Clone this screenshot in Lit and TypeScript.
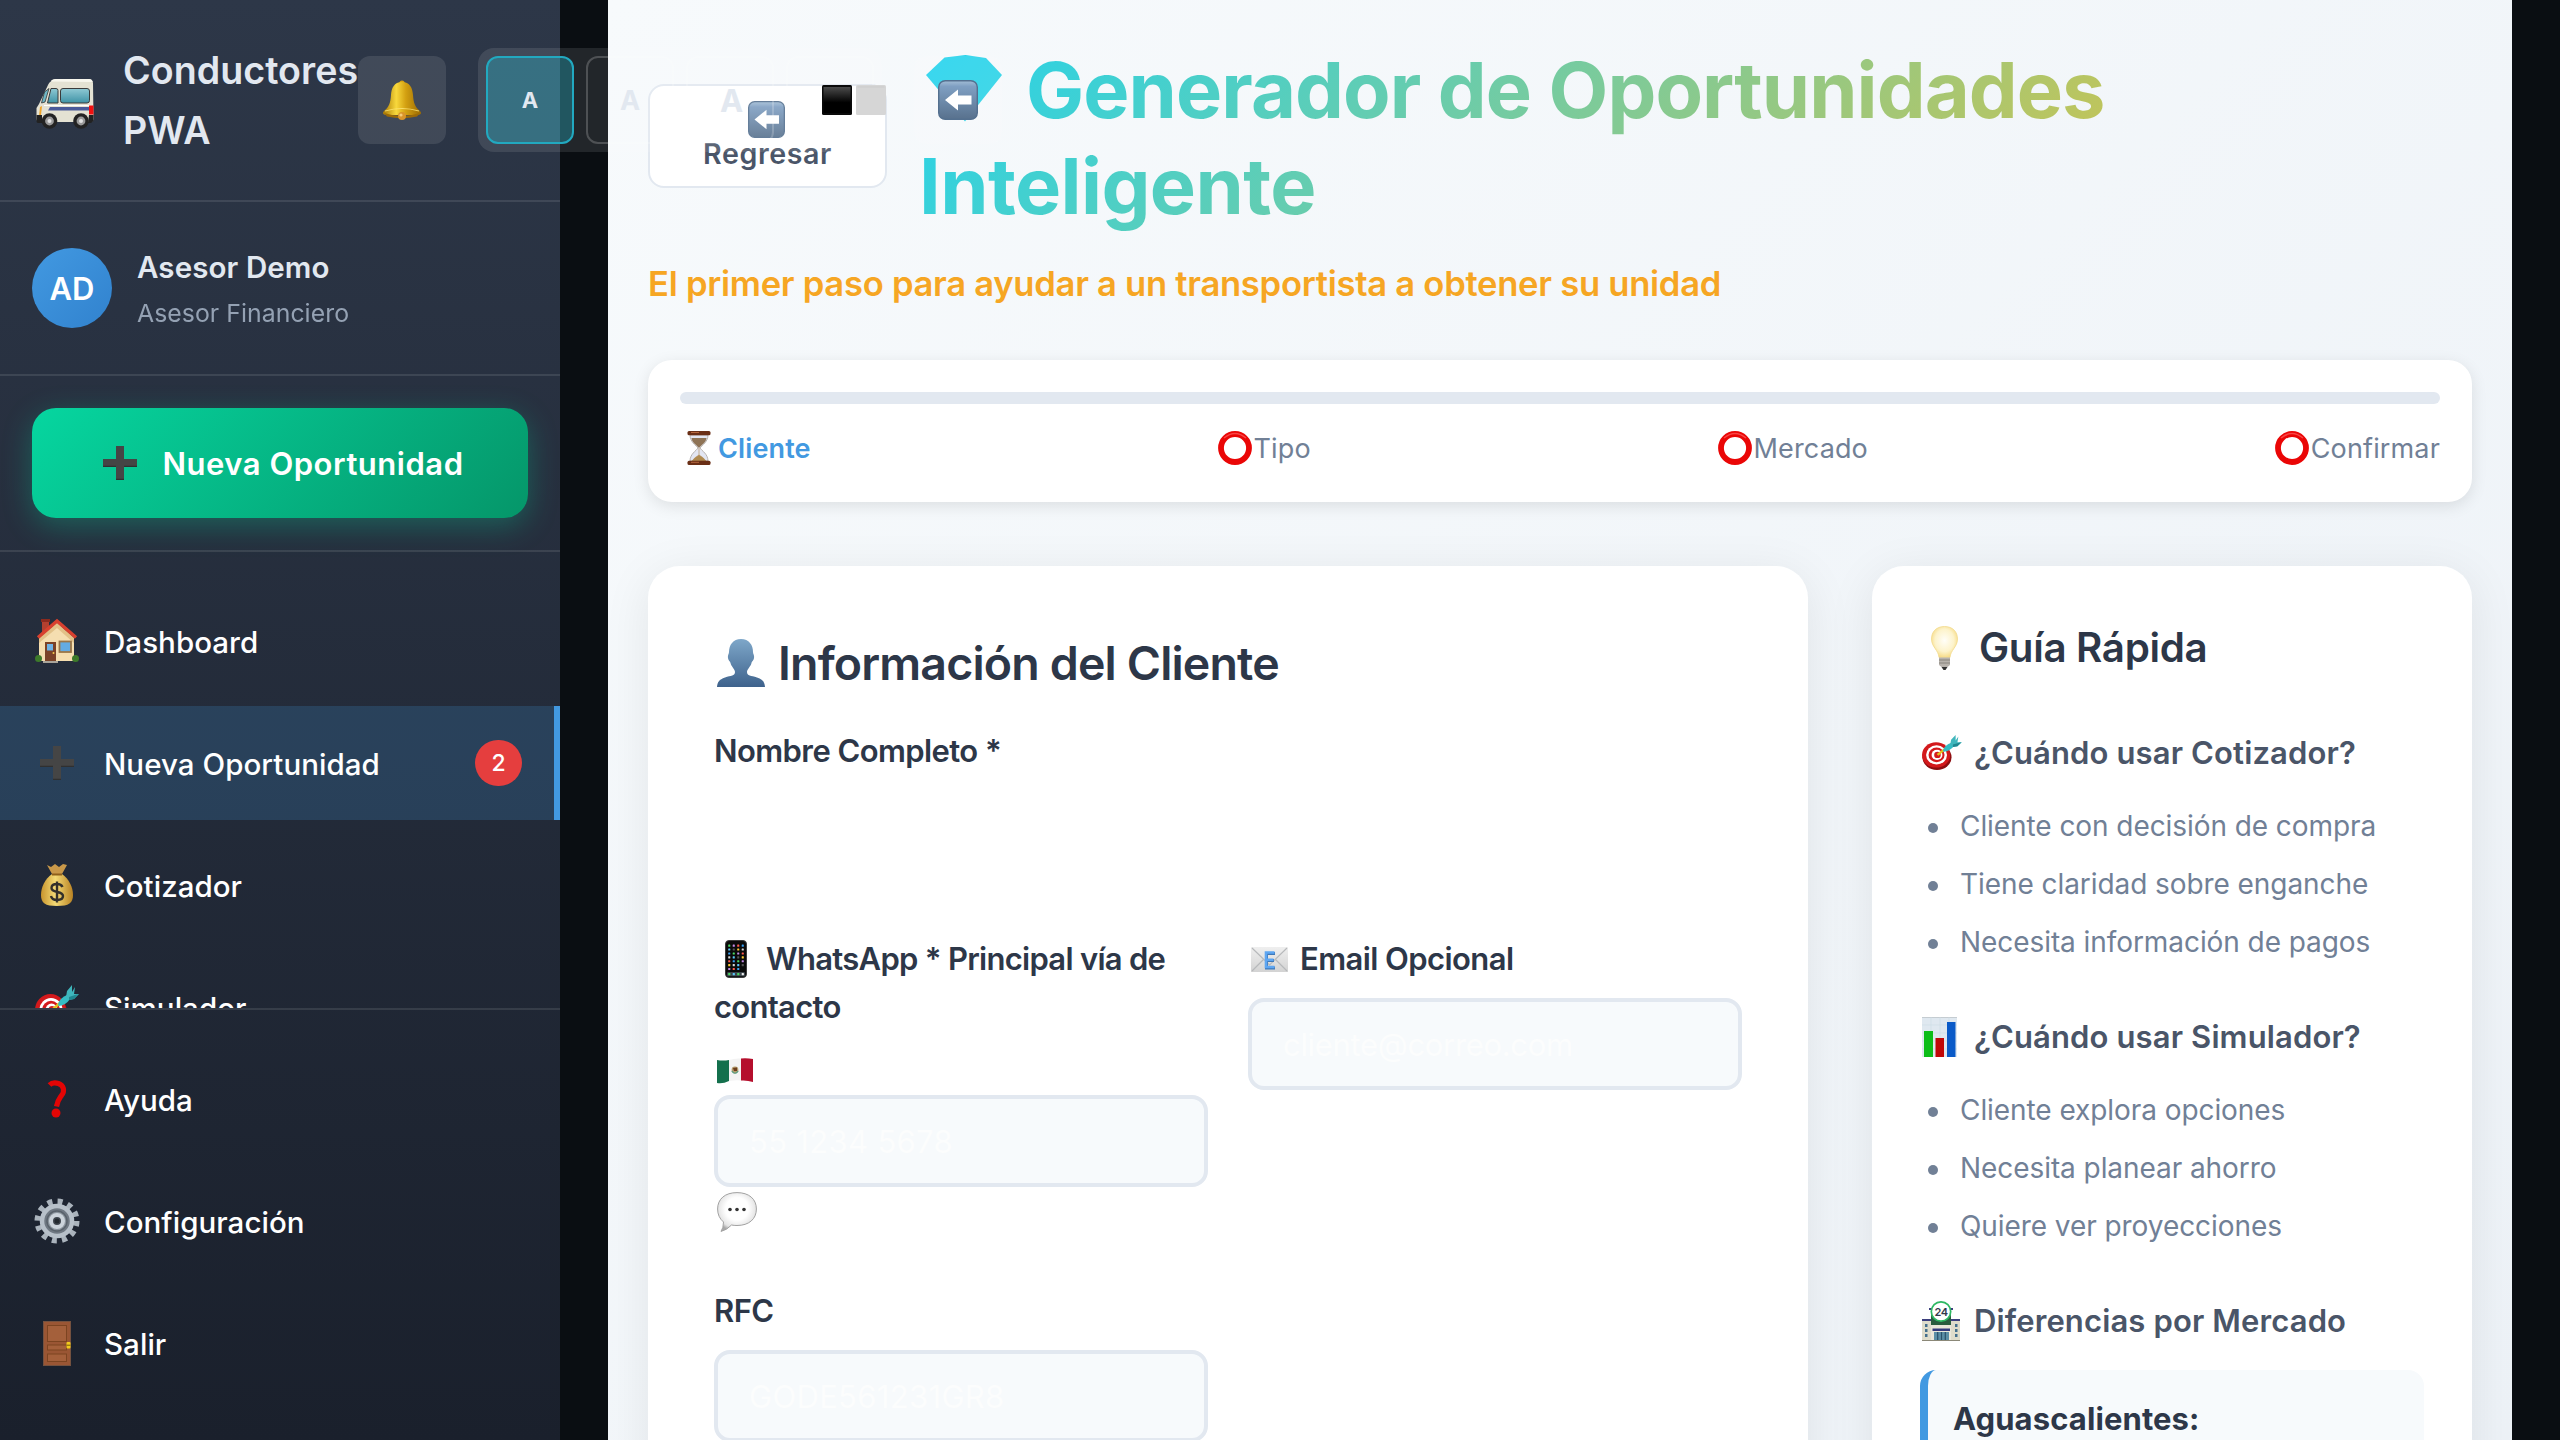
import { LitElement, html, svg, css, TemplateResult } from "lit";
import { customElement } from "lit/decorators.js";
import { classMap } from "lit/directives/class-map.js";

type Art = { w: number; h: number; art: TemplateResult };

/* Icon artwork, each drawn in a box of its own pixel size. */
const ICONS: Record<string, Art> = {
  van: { w: 58, h: 58, art: svg`
    <defs><linearGradient id="vg" x2="0" y2="1"><stop offset="0" stop-color="#8fc9d4"/><stop offset="1" stop-color="#3f93a6"/></linearGradient></defs>
    <path d="M15 8.500Q16 6.100 20 6H53Q56.500 6 57 10L57.500 46Q57.500 49 54 49H3Q.5 49 .5 45V35L3 31L12 12Q13 9 15 8.500Z" fill="#e4e2d3"/>
    <path d="M14.500 8.500Q16 6 20 6H53Q56 6 56.700 9Z" fill="#f8f7ee"/>
    <path d="M8.500 19L5.500 30L9 29L13 15.500Z" fill="#6fb7c6" stroke="#333" stroke-width=".8"/>
    <path d="M15 15.500H20Q22 15.500 22 17.500V30H11.500Z" fill="url(#vg)" stroke="#3b3b3b" stroke-width="1"/>
    <rect x="24.500" y="15.500" width="29" height="14.500" rx="2.500" fill="url(#vg)" stroke="#3b3b3b" stroke-width="1"/>
    <path d="M8 32H54V33H8Z" fill="#fff"/><path d="M14 34H54V37.500H12Z" fill="#4a5a99"/>
    <path d="M4 34L6 33L5 42L3 43Z" fill="#f0a52a"/>
    <rect x="53" y="32.500" width="4.500" height="9" fill="#f01010"/>
    <path d="M.5 42H6V50H2Q.5 50 .5 48ZM53 42H57.500V48L55 50H52Z" fill="#222"/>
    <circle cx="13.500" cy="48" r="7.800" fill="#232323"/><circle cx="45" cy="48" r="7.800" fill="#232323"/>
    <circle cx="13.500" cy="48" r="4.400" fill="#9a9a9a"/><circle cx="45" cy="48" r="4.400" fill="#9a9a9a"/>
    <circle cx="13.500" cy="48" r="2" fill="#e2e2e2"/><circle cx="45" cy="48" r="2" fill="#e2e2e2"/>` },
  bell: { w: 40, h: 40, art: svg`
    <defs><linearGradient id="bg"><stop offset="0" stop-color="#a87704"/><stop offset=".35" stop-color="#f8d83c"/><stop offset=".6" stop-color="#d3a011"/><stop offset="1" stop-color="#986903"/></linearGradient></defs>
    <circle cx="20" cy="3" r="2.600" fill="#d7a311"/>
    <path d="M20 2C28 2 30.500 8 31 15C31.500 23 33 27 38 31Q41 34 36 35H4Q-1 34 2 31C7 27 8.500 23 9 15C9.500 8 12 2 20 2Z" fill="url(#bg)"/>
    <path d="M3 31Q20 26 37 31" fill="none" stroke="#ffe97a" stroke-width="1.200" opacity=".8"/>
    <path d="M2 33Q20 39 38 33L35 36.500Q20 40 5 36.500Z" fill="#9c6a06"/>
    <circle cx="20" cy="36" r="4" fill="#d9942a"/><circle cx="19" cy="35" r="1.600" fill="#f6cb77"/>` },
  arrow: { w: 40, h: 40, art: svg`
    <defs><linearGradient id="ag" x2="0" y2="1"><stop offset="0" stop-color="#a3bdd6"/><stop offset=".15" stop-color="#7f9fc2"/><stop offset="1" stop-color="#58718d"/></linearGradient></defs>
    <rect x=".7" y=".7" width="38.600" height="38.600" rx="6.500" fill="url(#ag)" stroke="#54708f" stroke-width="1.400"/>
    <path d="M7 20L20 9.500V15.500H33.500V24.500H20V30.500Z" fill="#fff"/>` },
  plus: { w: 34, h: 34, art: svg`
    <path d="M13 0H21V13H34V21H21V34H13V21H0V13H13Z" fill="#454545"/>
    <path d="M13 33.300H21M0 20.300H13M21 20.300H34" stroke="#303030" stroke-width="1.200"/>` },
  house: { w: 44, h: 44, art: svg`
    <path d="M7 1H14V18H7Z" fill="#b3402f"/><path d="M6 0H15V3H6Z" fill="#8c2a1e"/>
    <path d="M22 4L39 19V42H4V19Z" fill="#f5deb0"/>
    <path d="M22 4L39 19V24L22 9L4 24V19Z" fill="#e2c188"/>
    <path d="M3 18.500L22 2L41 18.500" fill="none" stroke="#d8402e" stroke-width="3.400"/>
    <path d="M10 23H21V42H10Z" fill="#7b4227"/><rect x="12" y="25" width="6" height="6.500" fill="#6fb2e4"/><circle cx="18.500" cy="34" r="1" fill="#f3c94e"/>
    <rect x="24.500" y="22.500" width="11.500" height="10.500" fill="#63abe3" stroke="#9b7648" stroke-width="1.800"/>
    <circle cx="3.500" cy="39.500" r="3.500" fill="#3d7a2a"/><circle cx="40.500" cy="39.500" r="3.500" fill="#3d7a2a"/>
    <path d="M8 42H23V44H8Z" fill="#a9a49a"/>` },
  bag: { w: 32, h: 42, art: svg`
    <defs><linearGradient id="mg"><stop offset="0" stop-color="#c8952e"/><stop offset=".45" stop-color="#f4da75"/><stop offset="1" stop-color="#b98324"/></linearGradient></defs>
    <path d="M6 1L10 3L14 0L18 3L22 0L26 1L21 10H11Z" fill="#c99849"/>
    <path d="M11 10H21C28 15 32 23 32 31C32 39 28 42 16 42S0 39 0 31C0 23 4 15 11 10Z" fill="url(#mg)"/>
    <path d="M11 10.500H21" stroke="#8e5f1b" stroke-width="2"/>
    <path d="M21.500 23C20.500 20.500 18.500 20 16 20C12.500 20 10.500 21.700 10.500 24C10.500 29.500 22 26.500 22 32C22 34.500 19.500 36 16 36C12.500 36 10.500 34.500 10 32M16 17.500V38.500" fill="none" stroke="#33302b" stroke-width="2.400"/>` },
  target: { w: 44, h: 44, art: svg`
    <ellipse cx="16.500" cy="28" rx="16" ry="16" fill="#8c0d10"/><ellipse cx="15.500" cy="25" rx="15.500" ry="16" fill="#d3191c"/>
    <ellipse cx="16" cy="25" rx="11.500" ry="12" fill="#fff"/><ellipse cx="16" cy="25" rx="8.800" ry="9.300" fill="#d3191c"/>
    <ellipse cx="16.500" cy="25" rx="6" ry="6.400" fill="#fff"/><ellipse cx="17" cy="25" rx="3.600" ry="4" fill="#d3191c"/>
    <path d="M17 25L25 18" stroke="#e4c21b" stroke-width="2.600"/>
    <path d="M23 20Q24 13 33 9.500L35 14Q31 20 24 21Z" fill="#35bcc4"/>
    <path d="M31 12L32 6L37 0L37 7L40 2L39 9L44 9L39 14L34 15Z" fill="#3fb6bc"/><path d="M34 12L43 9L39 14L34 15Z" fill="#1f8790"/>` },
  question: { w: 18, h: 37, art: svg`
    <path d="M1.500 4C4 1.500 8 1.700 10.500 2.500C16 4.500 17 10 13.500 14.500C11 18 9.500 19.500 8.500 25.500" fill="none" stroke="#e30505" stroke-width="5.200"/>
    <circle cx="8" cy="32" r="4.500" fill="#e30505"/>` },
  gear: { w: 46, h: 46, art: svg`
    <circle cx="23" cy="23" r="19.500" fill="none" stroke="#aab3bc" stroke-width="6" stroke-dasharray="5 5.210"/>
    <circle cx="23" cy="23" r="15" fill="#6f7882" stroke="#b7c0c9" stroke-width="4.500"/>
    <circle cx="23" cy="23" r="10" fill="#8b949d" stroke="#59626b" stroke-width="1.500"/>
    <circle cx="23" cy="23" r="6" fill="#3e454d" stroke="#ccd4db" stroke-width="4"/><circle cx="23" cy="23" r="2.500" fill="#23292f"/>` },
  door: { w: 28, h: 45, art: svg`
    <rect width="28" height="45" fill="#9a5634"/><rect x=".5" y=".5" width="27" height="44" fill="none" stroke="#74513f"/>
    <g fill="#a4603b" stroke="#7c4421" stroke-width="1"><rect x="4.500" y="4.500" width="19" height="16"/><rect x="4.500" y="24" width="19" height="5"/><rect x="4.500" y="33" width="19" height="7.500"/></g>
    <rect x="23.500" y="21" width="4" height="6.500" rx="1" fill="#f2cb1d"/><path d="M23.500 24.200H27.500" stroke="#7c5a0a"/>` },
  hourglass: { w: 24, h: 34, art: svg`
    <path d="M3 4C3 11 9 14 11 17C9 20 3 23 3 30H21C21 23 15 20 13 17C15 14 21 11 21 4Z" fill="#e3e6f2" stroke="#a9a39c" stroke-width=".8"/>
    <path d="M4.500 7C5 12 10 14 12 17C14 14 19 12 19.500 7Z" fill="#8f7456"/><path d="M12 17V30H5Q8 26 12 24Q16 26 19 30H12" fill="#b08a50" stroke="#b08a50" stroke-width=".6"/>
    <rect x=".5" width="23" height="4.200" rx="1.500" fill="#6a2f16"/><rect x=".5" y="29.800" width="23" height="4.200" rx="1.500" fill="#6a2f16"/>
    <path d="M4 1.500H12M4 31.300H12" stroke="#b5673f" stroke-width="1"/>` },
  ring: { w: 34, h: 34, art: svg`<circle cx="17" cy="17" r="14" fill="none" stroke="#ea0606" stroke-width="5.800"/><path d="M6 7Q17 -2 28 7" fill="none" stroke="#f94545" stroke-width="1.500"/>` },
  person: { w: 48, h: 48, art: svg`
    <defs><linearGradient id="pg" x2="0" y2="1"><stop offset="0" stop-color="#7ea7c9"/><stop offset="1" stop-color="#3e628c"/></linearGradient></defs>
    <path d="M24 0C32 0 36 6 36 13C36 15 37.500 16 37 19C36.500 22 35 22 34.500 24C33.500 28 30 30 30 33C30 37 34 36.500 40 38.500C46 40.500 47.500 43 48 48H0C.5 43 2 40.500 8 38.500C14 36.500 18 37 18 33C18 30 14.500 28 13.500 24C13 22 11.500 22 11 19C10.500 16 12 15 12 13C12 6 16 0 24 0Z" fill="url(#pg)"/>` },
  phone: { w: 22, h: 38, art: svg`
    <rect x=".5" y=".5" width="21" height="37" rx="3.500" fill="#0a0a0a" stroke="#3c3c3c"/>
    ${[0, 1, 2, 3, 4, 5, 6].map((r) => [0, 1, 2, 3].map((c) => r === 6 && c === 3 ? svg`` : svg`<rect x=${3.2 + c * 4.5} y=${4.6 + r * 3.9} width="2.100" height="2.100" rx=".5" fill=${["#4cd964", "#d8d8d8", "#c58be8", "#5ac8fa", "#ff5a4e", "#555555", "#3aa0f3", "#ffcc33"][(r * 3 + c * 2) % 8]}/>`))}
    <rect x="2" y="32" width="18" height="4.200" rx="1.200" fill="#9fb8c8" opacity=".35"/>
    ${["#4cd964", "#5ac8fa", "#4cd964", "#eeeeee"].map((f, c) => svg`<rect x=${3.2 + c * 4.5} y="33" width="2.200" height="2.200" rx=".5" fill=${f}/>`)}` },
  flag: { w: 36, h: 25, art: svg`
    <path d="M0 2Q6 3 12 2V23Q6 26 0 25Z" fill="#14704d"/><path d="M12 2Q18 0 24 .500V22.500Q18 22 12 23Z" fill="#f3f3f3"/><path d="M24 .5Q30 0 36 1V24Q30 22 24 22.500Z" fill="#b50f2d"/>
    <circle cx="18" cy="12" r="3.400" fill="#b59a6a"/><path d="M16 10L20 9.500L20 13L17 13Z" fill="#6a3d1d"/><path d="M14.800 13Q18 17.500 21.200 13" fill="none" stroke="#4c9f86" stroke-width="1.200"/>` },
  bubble: { w: 40, h: 40, art: svg`
    <defs><radialGradient id="cg" cx=".5" cy=".42" r=".58"><stop offset=".5" stop-color="#fff"/><stop offset=".85" stop-color="#e4e4e4"/><stop offset="1" stop-color="#a8a8a8"/></radialGradient></defs>
    <path d="M20 .6C32 .6 39.400 7 39.400 17S32 33.500 20 33.500Q17 33.500 14.500 33Q10 38 4 39.400Q6.500 36 6.500 30Q.6 25 .6 17C.6 7 8 .6 20 .6Z" fill="url(#cg)" stroke="#a2a2a2" stroke-width="1"/>
    <g fill="#333"><circle cx="13" cy="17.500" r="1.800"/><circle cx="20" cy="17.500" r="1.800"/><circle cx="27" cy="17.500" r="1.800"/></g>` },
  mail: { w: 37, h: 25, art: svg`
    <defs><linearGradient id="eg" x2="0" y2="1"><stop offset="0" stop-color="#efefef"/><stop offset="1" stop-color="#d3d3d3"/></linearGradient></defs>
    <rect width="37" height="25" fill="url(#eg)"/><path d="M1 1L18.500 18L36 1M1 24L13 12M36 24L24 12" fill="none" stroke="#b7b9bb" stroke-width="1.200"/>
    <path d="M24 6.500H15.500V21H24M15.500 13.500H23" fill="none" stroke="#3f79b8" stroke-width="3"/><path d="M23.500 5.500H15V20H23.500M15 12.800H22.500" fill="none" stroke="#5ea6f2" stroke-width="2.600"/>` },
  bulb: { w: 27, h: 44, art: svg`
    <defs><radialGradient id="lg" cx=".5" cy=".45" r=".6"><stop offset="0" stop-color="#fffef8"/><stop offset=".6" stop-color="#fdf3cb"/><stop offset="1" stop-color="#f5d576"/></radialGradient></defs>
    <path d="M13.500 .5C22 .5 26.500 6 26.500 13C26.500 21 19.500 24 19 31.500H8C7.500 24 .5 21 .5 13C.5 6 5 .5 13.500 .5Z" fill="url(#lg)" stroke="#f3da8c" stroke-width=".8"/>
    <path d="M8 31.500H19V39L16.500 41H10.500L8 39Z" fill="#b7b2ac"/><path d="M8 34H19M8 37H19" stroke="#857f79" stroke-width=".9"/><path d="M10.500 41H16.500L14.500 44H12.500Z" fill="#333"/>` },
  chart: { w: 35, h: 40, art: svg`
    <rect width="35" height="40" fill="#dfe8f0"/><path d="M0 .5H35" stroke="#c5ccd1"/><path d="M0 8H35M0 16H35M0 24H35M0 32H35M9 0V40M18 0V40M27 0V40" stroke="#cfdbe6" stroke-width=".6"/>
    <rect x="2" y="14" width="9" height="26" fill="#0cbd18"/><rect x="13.500" y="21" width="8.500" height="19" fill="#c00808"/><rect x="25" y="5" width="8.500" height="35" fill="#0a5ac8"/>` },
  store: { w: 38, h: 40, art: svg`
    <path d="M0 19H38V39H0Z" fill="#dedccb"/><path d="M0 18H38V20H0ZM7 7H31V9H7Z" fill="#3c3f7d"/><path d="M9 9H29V24H9Z" fill="#295c3e"/>
    <path d="M9 24H29V39H9Z" fill="#e9e7da"/><path d="M10.500 27.500H28V30H10.500Z" fill="#343a7c"/><path d="M12 31H27V39H12Z" fill="#5b8fa6"/><path d="M15.700 31V39M19.500 31V39M23.300 31V39" stroke="#29506a" stroke-width="1.200"/>
    <path d="M3 23H5.500V26H3ZM3 28H5.500V31H3ZM3 33H5.500V36H3ZM33 23H35.500V26H33ZM33 28H35.500V31H33ZM33 33H35.500V36H33Z" fill="#44708d"/>
    <path d="M0 39H38V40H0Z" fill="#8b8878"/>
    <circle cx="19" cy="10.500" r="9.700" fill="#fff" stroke="#2eb862" stroke-width="1.700"/>
    <text x="19" y="14.500" text-anchor="middle" font-family="Inter, sans-serif" font-size="11" font-weight="600" letter-spacing="-.5" fill="#33394d">24</text>` },
  black: { w: 30, h: 30, art: svg`
    <defs><linearGradient id="kg" x2="0" y2="1"><stop offset="0" stop-color="#4b4b4b"/><stop offset=".6" stop-color="#000"/></linearGradient></defs>
    <rect width="30" height="30" rx="1.500" fill="#0a0a0a"/><rect x="1.500" y="2" width="27" height="26" fill="url(#kg)"/>` },
  white: { w: 30, h: 30, art: svg`<rect width="30" height="30" rx="1.500" fill="#d6d6d6"/><path d="M1.500 2H28.500" stroke="#cbcbcb"/>` },
  gem: { w: 76, h: 66, art: svg`
    <defs><linearGradient id="dg" x2="1" y2="1"><stop offset="0" stop-color="#22d3ee"/><stop offset="1" stop-color="#30d3e3"/></linearGradient></defs>
    <path d="M0 20L18.500 2.500L39.500 0L60 3L76 20L39 66.500Z" fill="url(#dg)"/>` },
};

const icon = (name: string, w?: number, h?: number) => {
  const i = ICONS[name];
  return html`<svg class="ico" width=${w ?? i.w} height=${h ?? i.h} viewBox="0 0 ${i.w} ${i.h}" preserveAspectRatio="none" aria-hidden="true">${i.art}</svg>`;
};

const NAV = [
  { icon: "house", label: "Dashboard" },
  { icon: "plus", label: "Nueva Oportunidad", badge: "2", active: true },
  { icon: "bag", label: "Cotizador" },
  { icon: "target", label: "Simulador" },
];
const FOOT = [
  { icon: "question", label: "Ayuda" },
  { icon: "gear", label: "Configuración" },
  { icon: "door", label: "Salir" },
];
const GUIDE = [
  { icon: "target", w: 40, h: 35, title: "¿Cuándo usar Cotizador?", items: ["Cliente con decisión de compra", "Tiene claridad sobre enganche", "Necesita información de pagos"] },
  { icon: "chart", w: 35, h: 40, title: "¿Cuándo usar Simulador?", items: ["Cliente explora opciones", "Necesita planear ahorro", "Quiere ver proyecciones"] },
];

@customElement("app-root")
export class AppRoot extends LitElement {
  static styles = css`
    :host { display: block; width: 2560px; height: 1440px; overflow: hidden; background: #0a0e12;
      font-family: Inter, "Liberation Sans", sans-serif; color: #2d3748; }
    * { box-sizing: border-box; margin: 0; padding: 0; }
    .ico { display: block; flex: none; overflow: visible; }
    .app { display: flex; height: 1440px; }

    .side { width: 560px; flex: none; height: 1440px; display: flex; flex-direction: column; z-index: 2;
      background: linear-gradient(180deg, #2d3748 0%, #1a202c 100%); position: relative; }
    .head { height: 202px; flex: none; padding: 0 32px; display: flex; align-items: center; border-bottom: 2px solid rgba(255,255,255,.1); white-space: nowrap; }
    .van { width: 91px; flex: none; padding: 4px 0 0 4px; }
    .brand { width: 235px; flex: none; padding-top: 1px; font-size: 37.6px; font-weight: 600; line-height: 60px; letter-spacing: .04px; color: #e2e8f0; white-space: normal; }
    .sq { width: 88px; height: 88px; flex: none; border-radius: 12px; background: rgba(255,255,255,.1); display: flex; align-items: center; justify-content: center; }
    .sizes { display: flex; gap: 12px; flex: none; padding: 8px; height: 104px; margin: 0 32px; border-radius: 16px; background: rgba(255,255,255,.1); }
    .size { width: 88px; height: 88px; flex: none; border: 2px solid rgba(255,255,255,.2); border-radius: 12px; display: flex; align-items: center; justify-content: center;
      color: #e2e8f0; font-weight: 700; font-size: 22px; }
    .size.on { border-color: #22a9c0; background: rgba(34,211,238,.28); }
    .size.mid { font-size: 27px; }
    .size.big { font-size: 31px; padding-left: 3px; }
    .contrast { justify-content: flex-start; gap: 4px; padding-left: 34px; }

    .user { height: 174px; flex: none; padding: 0 32px; display: flex; align-items: center; gap: 25px; border-bottom: 2px solid rgba(255,255,255,.1); }
    .avatar { width: 80px; height: 80px; border-radius: 50%; background: linear-gradient(135deg, #4299e1, #3182ce); color: #fff; font-weight: 600; font-size: 31px;
      display: flex; align-items: center; justify-content: center; }
    .who { padding-top: 2px; }
    .name { font-size: 29.500px; font-weight: 600; line-height: 47px; letter-spacing: .1px; color: #e2e8f0; }
    .role { font-size: 24.800px; line-height: 44px; letter-spacing: .05px; color: #a0aec0; opacity: .9; }
    .cta { height: 176px; flex: none; padding: 32px 32px 0; border-bottom: 2px solid rgba(255,255,255,.1); }
    .ctab { height: 110px; border-radius: 24px; background: linear-gradient(135deg, #06d6a0, #059669); box-shadow: 0 8px 30px rgba(6,214,160,.3); color: #fff;
      font-size: 31px; font-weight: 600; letter-spacing: .52px; display: flex; align-items: center; justify-content: center; gap: 25px; padding-left: 7px; }

    .nav { flex: 1; min-height: 0; overflow: hidden; padding-top: 32px; }
    .foot { height: 432px; flex: none; padding-top: 32px; border-top: 2px solid rgba(255,255,255,.1); }
    .item { height: 114px; margin-bottom: 8px; padding: 0 32px; display: flex; align-items: center; color: #fff; font-size: 29.500px; font-weight: 500; letter-spacing: .05px; }
    .item .slot { width: 50px; flex: none; margin-right: 22px; display: flex; justify-content: center; }
    .item .txt { flex: 1; padding-top: 2px; }
    .item.active { background: rgba(66,153,225,.2); border-right: 6px solid #4299e1; }
    .badge { min-width: 47px; height: 46px; border-radius: 23px; background: #e53e3e; font-size: 23px; font-weight: 500; display: flex; align-items: center; justify-content: center; }

    .main { margin-left: 48px; width: 1904px; flex: none; height: 1440px; overflow: hidden; padding: 40px 40px 0; background: linear-gradient(135deg, #f7fafc 0%, #edf2f7 100%); }
    .top { display: flex; align-items: center; gap: 32px; height: 192px; }
    .back { width: 239px; height: 104px; flex: none; border: 2px solid #e2e8f0; border-radius: 16px; background: #fff; display: flex; flex-direction: column; align-items: center;
      padding-top: 15px; font-size: 28.600px; font-weight: 600; color: #4a5568; letter-spacing: .6px; line-height: 32px; }
    .back .ico { margin-left: -2px; }
    h1 { flex: 1; font-size: 77.600px; font-weight: 700; line-height: 96px; letter-spacing: -.92px; color: transparent; padding-top: 3px;
      background: linear-gradient(135deg, #22d3ee, #fbbf24); -webkit-background-clip: text; background-clip: text; }
    h1 .ico { display: inline-block; vertical-align: -3px; margin: 0 24px 0 7px; }
    h1 .low { letter-spacing: -.6px; }
    .sub { margin-top: 24px; height: 54px; line-height: 54px; font-size: 34.600px; font-weight: 600; letter-spacing: -.27px; color: #f6a623; }
    .steps { margin-top: 50px; height: 142px; border-radius: 24px; background: #fff; padding: 32px; box-shadow: 0 4px 16px rgba(0,0,0,.1); }
    .bar { height: 12px; border-radius: 6px; background: #e2e8f0; }
    .row { display: flex; justify-content: space-between; margin-top: 20px; height: 48px; align-items: center; }
    .step { display: flex; align-items: center; gap: 2px; font-size: 27px; letter-spacing: .14px; color: #718096; }
    .step.on { color: #4299e1; font-weight: 600; padding-left: 7px; gap: 7px; }

    .cols { display: flex; gap: 64px; margin-top: 64px; }
    .card { background: #fff; border-radius: 32px; box-shadow: 0 8px 48px rgba(0,0,0,.08); height: 1000px; }
    .form { width: 1160px; padding: 66px; }
    h2 { display: flex; align-items: center; gap: 13px; height: 62px; font-size: 46.500px; font-weight: 600; letter-spacing: -.84px; }
    .form h2 { padding-left: 3px; }
    .lab { font-size: 31px; font-weight: 600; line-height: 48px; letter-spacing: -.58px; }
    .lab.tight { letter-spacing: -.72px; }
    .lab .ico { display: inline-block; }
    .ph { margin: 0 12px 0 11px; }
    .ph .ico { vertical-align: -8px; }
    .ml { margin: 0 12px 0 3px; }
    .ml .ico { vertical-align: -2px; }
    .first { margin-top: 33px; height: 208px; }
    .two { display: grid; grid-template-columns: 494px 494px; gap: 50px 40px; }
    .input { height: 92px; width: 494px; border: 4px solid #e2e8f0; border-radius: 16px; background: #f7fafc; display: flex; align-items: center; padding: 1px 31px 0; font-size: 31px; letter-spacing: .32px; color: #fcfdfd; }
    .mailto { letter-spacing: -.32px; }
    .gap { margin-top: 15px; }
    .line { height: 50px; display: flex; align-items: center; padding-left: 3px; }
    .fl { margin-top: 14px; }
    .guide { width: 600px; padding: 48px; }
    .guide h2 { height: 67px; font-size: 40.300px; letter-spacing: -.32px; padding-left: 11px; gap: 21px; }
    .sec { margin-bottom: 42px; }
    h3 { display: flex; align-items: center; height: 48px; padding-bottom: 1px; font-size: 31px; font-weight: 600; letter-spacing: .13px; color: #4a5568; }
    h3 .slot { width: 54px; padding-left: 2px; flex: none; }
    .guide h2 + .sec { margin-top: 48px; }
    ul { list-style: none; margin-top: 20px; }
    li { height: 58px; display: flex; align-items: center; gap: 22px; padding-left: 8px; font-size: 28px; letter-spacing: -.07px; color: #718096; }
    li::before { content: ""; width: 10px; height: 10px; border-radius: 50%; background: #718096; margin-top: 3px; }
    .mkt { margin-top: 25px; height: 200px; border-left: 8px solid #4299e1; border-radius: 16px; background: #f7fafc; padding: 25px; font-size: 31px; font-weight: 700; letter-spacing: .1px; line-height: 48px; }
  `;

  private item(i: { icon: string; label: string; badge?: string; active?: boolean }) {
    return html`<div class=${classMap({ item: true, active: !!i.active })}>
      <span class="slot">${icon(i.icon)}</span><span class="txt">${i.label}</span>${i.badge ? html`<span class="badge">${i.badge}</span>` : ""}
    </div>`;
  }

  render() {
    return html`<div class="app">
      <aside class="side">
        <div class="head">
          <div class="van">${icon("van")}</div>
          <div class="brand">Conductores PWA</div>
          <div class="sq">${icon("bell")}</div>
          <div class="sizes">
            <div class="size on">A</div><div class="size mid">A</div><div class="size big">A</div>
            <div class="size contrast">${icon("black")}${icon("white")}</div>
          </div>
          <div class="sq">${icon("arrow")}</div>
        </div>
        <div class="user">
          <div class="avatar">AD</div>
          <div class="who"><div class="name">Asesor Demo</div><div class="role">Asesor Financiero</div></div>
        </div>
        <div class="cta"><div class="ctab">${icon("plus")}<span>Nueva Oportunidad</span></div></div>
        <nav class="nav">${NAV.map((i) => this.item(i))}</nav>
        <div class="foot">${FOOT.map((i) => this.item(i))}</div>
      </aside>
      <main class="main">
        <div class="top">
          <div class="back">${icon("arrow", 37, 37)}<span>Regresar</span></div>
          <h1>${icon("gem")}Generador de Oportunidades<br /><span class="low">Inteligente</span></h1>
        </div>
        <div class="sub">El primer paso para ayudar a un transportista a obtener su unidad</div>
        <div class="steps">
          <div class="bar"></div>
          <div class="row">
            <div class="step on">${icon("hourglass")}<span>Cliente</span></div>
            ${["Tipo", "Mercado", "Confirmar"].map((s) => html`<div class="step">${icon("ring")}<span>${s}</span></div>`)}
          </div>
        </div>
        <div class="cols">
          <section class="card form">
            <h2>${icon("person")}<span>Información del Cliente</span></h2>
            <div class="lab first">Nombre Completo *</div>
            <div class="two">
              <div>
                <div class="lab tight"><span class="ph">${icon("phone")}</span> WhatsApp * Principal vía de contacto</div>
                <div class="line fl">${icon("flag")}</div>
                <div class="input">55 1234 5678</div>
                <div class="line">${icon("bubble")}</div>
              </div>
              <div>
                <div class="lab"><span class="ml">${icon("mail")}</span>Email Opcional</div>
                <div class="input gap mailto">cliente@correo.com</div>
              </div>
              <div>
                <div class="lab">RFC</div>
                <div class="input gap">GODE561231GR8</div>
              </div>
            </div>
          </section>
          <section class="card guide">
            <h2>${icon("bulb")}<span>Guía Rápida</span></h2>
            ${GUIDE.map((g) => html`<div class="sec">
              <h3><span class="slot">${icon(g.icon, g.w, g.h)}</span>${g.title}</h3>
              <ul>${g.items.map((t) => html`<li>${t}</li>`)}</ul>
            </div>`)}
            <h3><span class="slot">${icon("store")}</span>Diferencias por Mercado</h3>
            <div class="mkt">Aguascalientes:</div>
          </section>
        </div>
      </main>
    </div>`;
  }
}
